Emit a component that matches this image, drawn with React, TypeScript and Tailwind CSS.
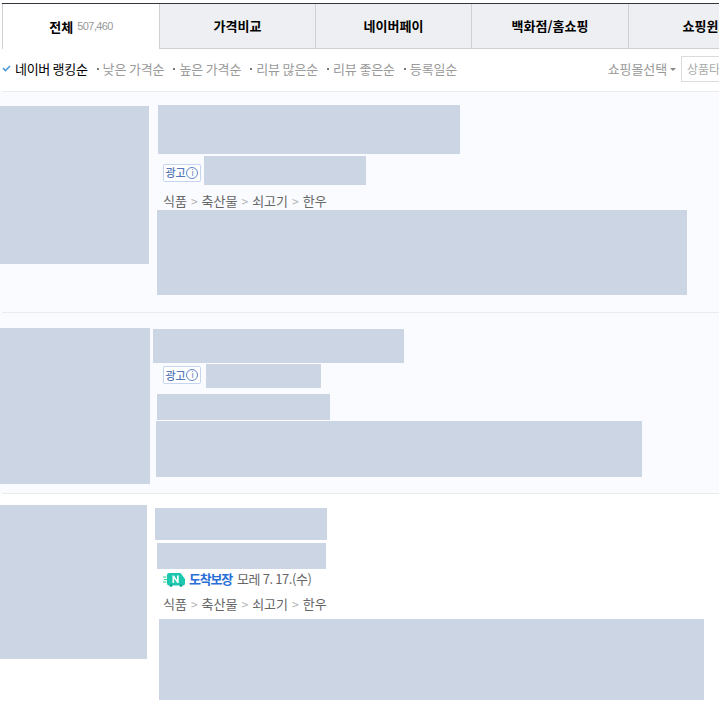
const FONT = "font-['Noto_Sans_CJK_KR','Noto_Sans',sans-serif]";

function Block({ className }: { className: string }) {
  return <div className={`bg-[#cbd5e3] shrink-0 ${className}`} />;
}

function Tab({ label, className }: { label: string; className: string }) {
  return (
    <div className={`h-[45px] shrink-0 flex items-center justify-center bg-[#eeeff2] border-r border-b border-[#cfd0d4] text-[13px] font-bold text-black ${className}`}>
      {label}
    </div>
  );
}

function Sort({ label, className }: { label: string; className?: string }) {
  return (
    <span className={`flex items-center text-[13px] text-[#9a9a9a] tracking-[-0.15px] ${className ?? ""}`}>
      <span className="w-[2px] h-[2px] bg-[#777] mr-[4px]" />
      {label}
    </span>
  );
}

function Category() {
  return (
    <div className="flex items-center h-[18px] text-[13px] text-[#666] gap-[4px]">
      <span>식품</span><span className="text-[#b3b3b3] text-[12px]">&gt;</span>
      <span>축산물</span><span className="text-[#b3b3b3] text-[12px]">&gt;</span>
      <span>쇠고기</span><span className="text-[#b3b3b3] text-[12px]">&gt;</span>
      <span>한우</span>
    </div>
  );
}

function AdBadge({ className }: { className: string }) {
  return (
    <div className={`w-[38px] h-[18px] shrink-0 flex items-center justify-center gap-[1px] bg-white border border-[#c5d5f2] rounded-[2px] text-[11px] font-medium text-[#5577b8] tracking-[-0.2px] ${className}`}>
      <span>광고</span>
      <span className="w-[12px] h-[12px] rounded-full border border-[#5f86cc] flex items-center justify-center text-[8px] font-normal leading-none">i</span>
    </div>
  );
}

export default function App() {
  return (
    <div className={`w-[723px] h-[707px] overflow-hidden bg-white ${FONT}`}>
      <div className="w-[719px] overflow-hidden">
        <div className="pt-[3px] pl-[2px]">
          <div className="h-[2px] bg-[#34343c]" />
          <div className="flex -mt-[1px] w-[800px]">
            <div className="h-[45px] w-[157px] shrink-0 flex items-center justify-center bg-white border-l border-r-0 border-[#cfd0d4] text-black">
              <span className="text-[13px] font-bold">전체</span>
              <span className="text-[11px] text-[#999] ml-[4px] tracking-[-0.6px] font-['Liberation_Sans',sans-serif]">507,460</span>
            </div>
            <Tab label="가격비교" className="w-[157px] border-l" />
            <Tab label="네이버페이" className="w-[156px]" />
            <Tab label="백화점/홈쇼핑" className="w-[157px]" />
            <Tab label="쇼핑윈도" className="w-[156px]" />
          </div>
        </div>

        <div className="ml-[2px] h-[43px] pb-[2px] flex items-center border-b border-[#ebebeb] bg-white">
          <svg width="9" height="7" viewBox="0 0 9 7" className="shrink-0 mb-[1px]">
            <path d="M1 3.2 L3.5 5.6 L8 1" fill="none" stroke="#4d9bd8" strokeWidth="1.6" />
          </svg>
          <span className="ml-[4px] text-[13px] text-black tracking-[-0.3px]">네이버 랭킹순</span>
          <Sort label="낮은 가격순" className="ml-[9px]" />
          <Sort label="높은 가격순" className="ml-[9px]" />
          <Sort label="리뷰 많은순" className="ml-[9px]" />
          <Sort label="리뷰 좋은순" className="ml-[9px]" />
          <Sort label="등록일순" className="ml-[9px]" />
          <span className="ml-auto text-[13px] text-[#999] tracking-[-0.1px]">쇼핑몰선택</span>
          <span className="ml-[3px] w-0 h-0 border-x-[3px] border-x-transparent border-t-[3px] border-t-[#888]" />
          <div className="ml-[5px] w-[38px] h-[26px] shrink-0 border border-r-0 border-[#dcdcdc] pl-[5px] flex items-center text-[12px] text-[#aaa] overflow-hidden whitespace-nowrap">상품타입</div>
        </div>

        <div className="h-[220px] bg-[#fafbff] flex">
          <Block className="w-[149px] h-[158px] mt-[14px]" />
          <div className="flex-1 min-w-0">
            <Block className="ml-[9px] mt-[13px] w-[302px] h-[49px]" />
            <div className="flex items-center mt-[2px] ml-[14px] h-[29px]">
              <AdBadge className="mt-[4px]" />
              <Block className="ml-[3px] w-[162px] h-[29px]" />
            </div>
            <div className="ml-[14px] mt-[7px]"><Category /></div>
            <Block className="ml-[8px] w-[530px] h-[85px]" />
          </div>
        </div>
        <div className="ml-[2px] h-px bg-[#ebebeb]" />

        <div className="h-[180px] bg-[#fafbff] flex">
          <Block className="w-[150px] h-[156px] mt-[15px]" />
          <div className="flex-1 min-w-0">
            <Block className="ml-[3px] mt-[16px] w-[251px] h-[34px]" />
            <div className="flex items-center mt-[1px] ml-[13px] h-[24px]">
              <AdBadge className="mb-[2px]" />
              <Block className="ml-[5px] w-[115px] h-[24px]" />
            </div>
            <Block className="ml-[7px] mt-[6px] w-[173px] h-[26px]" />
            <Block className="ml-[6px] mt-[1px] w-[486px] h-[56px]" />
          </div>
        </div>
        <div className="ml-[2px] h-px bg-[#ebebeb]" />

        <div className="flex bg-white">
          <Block className="w-[147px] h-[154px] mt-[11px]" />
          <div className="flex-1 min-w-0">
            <Block className="ml-[8px] mt-[14px] w-[172px] h-[32px]" />
            <Block className="ml-[10px] mt-[3px] w-[169px] h-[26px]" />
            <div className="flex items-center ml-[16px] mt-[1px] h-[18px] text-[13px] text-[#666]">
              <svg width="23" height="15" viewBox="0 0 23 15" className="shrink-0">
                <path d="M0 5h3.5M1 7.5h3M0 10h3.5" stroke="#2fd08f" strokeWidth="1.2" />
                <path d="M4 3a2 2 0 0 1 2-2h10.5c1 0 1.6.4 2 1.2L22 7v4.5a2 2 0 0 1-2 2H6a2 2 0 0 1-2-2z" fill="#1cc8ad" />
                <circle cx="8" cy="13.5" r="1.4" fill="#17a898" />
                <circle cx="18" cy="13.5" r="1.4" fill="#17a898" />
                <path d="M9.5 11V3.5h1.5l3 4.4V3.5h1.7V11h-1.4l-3.1-4.4V11z" fill="#fff" />
              </svg>
              <span className="ml-[3px] text-[13px] font-bold text-[#2a6fd6] tracking-[-1.2px]">도착보장</span>
              <span className="ml-[5px] text-[#666] tracking-[-0.4px]">모레 7. 17.(수)</span>
            </div>
            <div className="ml-[16px] mt-[7px]"><Category /></div>
            <Block className="ml-[12px] mt-[6px] w-[545px] h-[81px]" />
          </div>
        </div>
      </div>
    </div>
  );
}
